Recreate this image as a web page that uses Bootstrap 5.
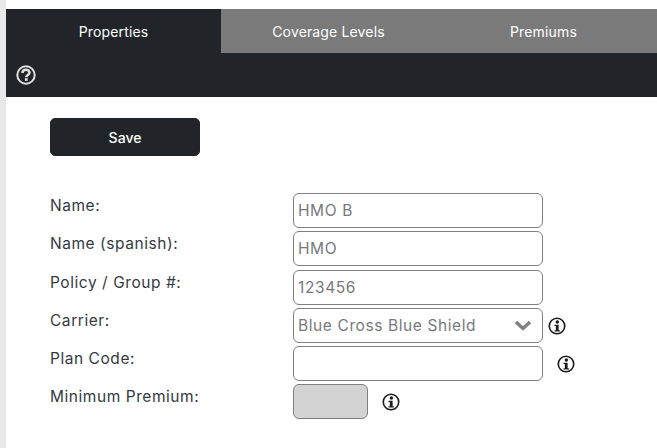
<!DOCTYPE html>
<html lang="en">
<head>
    <meta charset="UTF-8" />
    <title>Plan Properties</title>
    <link href="https://cdn.jsdelivr.net/npm/bootstrap@5.3.2/dist/css/bootstrap.min.css" rel="stylesheet">
    <style>
        body { background: #fff; font-family: Inter, sans-serif; font-size: 15.5px; color: #343a40; overflow: hidden; }
        .page { margin-left: 6px; padding-top: 9px; }
        .strip { background: #e9e9e9; width: 6px; }
        .tabs-bar { background: #7a7a7a; height: 44px; }
        .tabs-bar .nav-link { width: 215px; height: 44px; line-height: 46px; padding: 0; text-align: center; color: #fff; font-size: 14px; letter-spacing: .15px; border-radius: 0; }
        .tabs-bar .nav-link.active { background: #212529; }
        .help-bar { background: #212529; height: 44px; padding-left: 10px; }
        .btn-save { width: 150px; height: 38px; margin: 21px 0 37.2px 44px; font-size: 14px; font-weight: 500; border-radius: 5px; }
        .plan-form { padding-left: 44px; }
        .plan-row { height: 35px; margin-bottom: 3.2px; }
        .plan-row label { width: 243px; line-height: 25px; letter-spacing: .55px; }
        .plan-row .form-control, .plan-row .form-select { width: 250px; height: 35px; padding: 0 4px; font-size: 15.5px; color: #77797c; border-color: #808080; border-radius: 6px; letter-spacing: .6px; }
        .plan-row .form-select { background-image: none; }
        .plan-row .form-control.small { width: 75px; background: #d3d3d3; }
        .select-wrap { width: 250px; }
        .chev { right: 11px; top: 12px; }
        .info { flex-shrink: 0; }
        .info-carrier { margin: 9px 0 0 5px; }
        .info-code { margin: 9px 0 0 14px; }
        .info-min { margin: 9px 0 0 14px; }
    </style>
</head>
<body>
<svg class="d-none">
    <symbol id="i-info" viewBox="0 0 20 20">
        <circle cx="10" cy="10" r="8.6" fill="none" stroke="#1c1c1c" stroke-width="1.8"/>
        <circle cx="10.4" cy="5.6" r="1.9" fill="#1c1c1c"/>
        <path d="M7.2 8.6h4.6v6h1.4v1.4H7.3v-1.4h1.4V10H7.2z" fill="#1c1c1c"/>
    </symbol>
</svg>
<div class="d-flex">
    <div class="strip position-fixed top-0 bottom-0 start-0"></div>
    <div class="page flex-grow-1">
        <!-- Tabs -->
        <ul class="nav tabs-bar">
            <li class="nav-item"><a class="nav-link active" href="#">Properties</a></li>
            <li class="nav-item"><a class="nav-link" href="#">Coverage Levels</a></li>
            <li class="nav-item"><a class="nav-link" href="#">Premiums</a></li>
        </ul>
        <div class="help-bar d-flex align-items-center">
            <svg width="20" height="20" viewBox="0 0 20 20" fill="none">
                <circle cx="10" cy="10" r="8.7" stroke="#e0e0e0" stroke-width="2"/>
                <path d="M6.5 8C6.5 5.8 8 4.7 10 4.7s3.5 1.1 3.5 2.9c0 2.5-3.2 2.3-3.2 4.6" stroke="#e0e0e0" stroke-width="2.6"/>
                <rect x="8.9" y="13.3" width="2.8" height="2.6" fill="#e0e0e0"/>
            </svg>
        </div>

        <button class="btn btn-dark btn-save d-block" type="button">Save</button>

        <form class="plan-form">
            <div class="plan-row d-flex">
                <label>Name:</label>
                <input type="text" class="form-control" value="HMO B">
            </div>
            <div class="plan-row d-flex">
                <label>Name (spanish):</label>
                <input type="text" class="form-control" value="HMO">
            </div>
            <div class="plan-row d-flex">
                <label>Policy / Group #:</label>
                <input type="text" class="form-control" value="123456">
            </div>
            <div class="plan-row d-flex">
                <label>Carrier:</label>
                <div class="select-wrap position-relative">
                    <select class="form-select"><option>Blue Cross Blue Shield</option></select>
                    <svg class="chev position-absolute" width="18" height="11" viewBox="0 0 18 11" fill="none">
                        <path d="M2 2l7 6.5L16 2" stroke="#808080" stroke-width="3.4"/>
                    </svg>
                </div>
                <svg class="info info-carrier" width="18" height="18"><use href="#i-info"/></svg>
            </div>
            <div class="plan-row d-flex">
                <label>Plan Code:</label>
                <input type="text" class="form-control">
                <svg class="info info-code" width="18" height="18"><use href="#i-info"/></svg>
            </div>
            <div class="plan-row d-flex">
                <label>Minimum Premium:</label>
                <input type="text" class="form-control small">
                <svg class="info info-min" width="18" height="18"><use href="#i-info"/></svg>
            </div>
        </form>
    </div>
</div>
<script src="https://cdn.jsdelivr.net/npm/bootstrap@5.3.2/dist/js/bootstrap.bundle.min.js"></script>
</body>
</html>
